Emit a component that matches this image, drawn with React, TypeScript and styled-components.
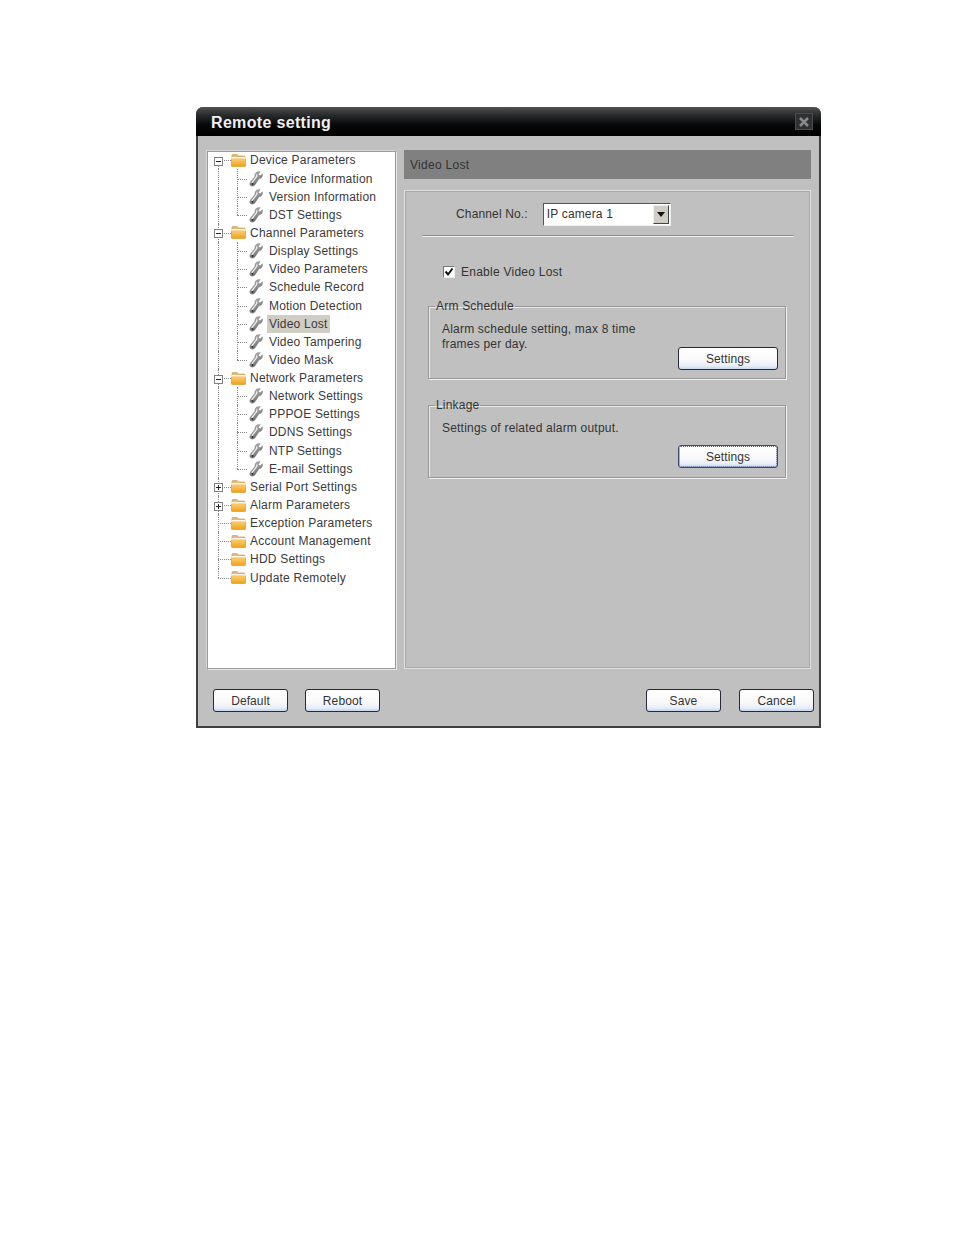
import React from "react";
import styled, { createGlobalStyle } from "styled-components";

const Global = createGlobalStyle`
  html, body { margin: 0; padding: 0; background: #fff; }
  body { font-family: "Liberation Sans", Arial, sans-serif; color: #333; }
`;

const Page = styled.div`
  width: 954px;
  height: 1235px;
  padding: 107px 0 0 196px;
  box-sizing: border-box;
`;

const Win = styled.div`
  width: 625px;
  height: 621px;
  box-sizing: border-box;
  background: #c0c0c0;
  border: solid #404040;
  border-width: 0 2px 2px 2px;
  border-radius: 7px 7px 0 0;
  display: flex;
  flex-direction: column;
`;

const TitleBar = styled.div`
  height: 29px;
  margin: 0 -2px;
  flex: none;
  border-radius: 7px 7px 0 0;
  background: linear-gradient(#505254 0%, #2c2e30 25%, #08090a 60%, #000 100%);
  display: flex;
  align-items: center;
  justify-content: space-between;
  padding: 2px 8px 0 15px;
  box-sizing: border-box;
`;

const Title = styled.div`
  color: #f0f0f0;
  font-size: 16px;
  font-weight: bold;
  letter-spacing: 0.33px;
`;

const CloseBox = styled.div`
  width: 18px;
  height: 17px;
  margin-top: -2px;
  box-sizing: border-box;
  background: #2e3032;
  border: 1px solid #4c4c4c;
  display: flex;
  align-items: center;
  justify-content: center;
`;

const Body = styled.div`
  flex: 1;
  display: flex;
  gap: 8px;
  padding: 14px 8px 0 9px;
  min-height: 0;
`;

const TreePanel = styled.div`
  width: 189px;
  height: 518px;
  margin-top: 1px;
  box-sizing: border-box;
  background: #fff;
  border: 1px solid #9a9a9a;
  box-shadow: 1px 1px 0 #e8e8e8, -1px -1px 0 #d8d8d8;
`;

const TreeList = styled.div`
  margin-top: -0.7px;
`;

const Row = styled.div<{ $spacing: number }>`
  height: 18.15px;
  display: flex;
  align-items: center;
  font-size: 12px;
  letter-spacing: ${(p) => p.$spacing}px;
  white-space: nowrap;
  color: #3a3a3a;
`;

const Guide = styled.div<{ $v: "none" | "full" | "top" | "bottom"; $h: boolean; $ext?: number }>`
  position: relative;
  width: 19.5px;
  height: 100%;
  flex: none;
  display: flex;
  align-items: center;
  justify-content: center;
  &::before {
    content: "";
    display: ${(p) => (p.$v === "none" ? "none" : "block")};
    position: absolute;
    left: 50%;
    top: ${(p) => (p.$v === "bottom" ? "50%" : "0")};
    bottom: ${(p) => (p.$v === "top" ? "50%" : "0")};
    border-left: 1px dotted #888;
  }
  &::after {
    content: "";
    display: ${(p) => (p.$h ? "block" : "none")};
    position: absolute;
    left: 50%;
    right: ${(p) => -(p.$ext ?? 0)}px;
    top: 50%;
    border-top: 1px dotted #888;
  }
`;

const Expander = styled.div`
  position: relative;
  z-index: 1;
  width: 9px;
  height: 9px;
  margin-left: 1px;
  margin-top: 2px;
  box-sizing: border-box;
  background: #fff;
  border: 1px solid #808080;
  display: flex;
  align-items: center;
  justify-content: center;
`;

const IconSlot = styled.div<{ $ml: number }>`
  width: 19px;
  height: 16px;
  margin-left: ${(p) => p.$ml}px;
  flex: none;
  display: flex;
  align-items: center;
  justify-content: flex-start;
`;

const Label = styled.span<{ $selected?: boolean; $ml: number }>`
  padding: 2px;
  line-height: 14px;
  margin-left: ${(p) => p.$ml}px;
  background: ${(p) => (p.$selected ? "#d0cdc4" : "transparent")};
`;

const RightCol = styled.div`
  flex: 1;
  display: flex;
  flex-direction: column;
  gap: 11px;
`;

const Header = styled.div`
  height: 29px;
  background: #808080;
  flex: none;
  display: flex;
  align-items: center;
  padding-left: 6px;
  font-size: 12px;
  letter-spacing: 0.3px;
  color: #333;
`;

const Panel = styled.div`
  height: 479px;
  box-sizing: border-box;
  border: 1px solid #e2e2e2;
  outline: 1px solid #a8a8a8;
  outline-offset: -2px;
  padding: 11px 14px 0 17px;
  display: flex;
  flex-direction: column;
`;

const ChannelRow = styled.div`
  display: flex;
  align-items: center;
  height: 24px;
  padding-left: 34px;
  font-size: 12px;
  letter-spacing: 0.15px;
  gap: 15px;
`;

const Select = styled.div`
  width: 128px;
  height: 23px;
  box-sizing: border-box;
  background: #fff;
  border: 1px solid;
  border-color: #555 #eee #eee #555;
  display: flex;
  align-items: center;
  justify-content: space-between;
  padding: 0 1px 0 3px;
  color: #333;
`;

const SelectBtn = styled.div`
  width: 16px;
  height: 19px;
  background: #cfcdc6;
  border: 1px solid;
  border-color: #eee #444 #444 #eee;
  box-sizing: border-box;
  display: flex;
  align-items: center;
  justify-content: center;
`;

const Rule = styled.div`
  height: 1px;
  background: #8e8e8e;
  border-bottom: 1px solid #f0f0f0;
  margin-top: 9px;
  width: 372px;
`;

const CheckRow = styled.label`
  display: flex;
  align-items: center;
  gap: 6px;
  margin: 28px 0 0 21px;
  font-size: 12px;
  letter-spacing: 0.25px;
`;

const CheckBox = styled.span`
  width: 12px;
  height: 12px;
  box-sizing: border-box;
  background: #fff;
  border: 1px solid;
  border-color: #777 #eee #eee #777;
  display: flex;
  align-items: center;
  justify-content: center;
`;

const Group = styled.fieldset<{ $top: number; $h: number }>`
  margin: ${(p) => p.$top}px 0 0 6px;
  width: 358px;
  height: ${(p) => p.$h}px;
  box-sizing: border-box;
  border: 1px solid #989898;
  box-shadow: 1px 1px 0 #f0f0f0, inset 1px 1px 0 #e8e8e8;
  padding: 0 7px 0 13px;
  font-size: 12px;
  letter-spacing: 0.2px;
  display: flex;
  flex-direction: column;
`;

const Legend = styled.legend`
  padding: 0 1px;
  margin-left: -7px;
  font-size: 12px;
  letter-spacing: 0.2px;
  line-height: 14px;
`;

const GroupText = styled.div`
  line-height: 15px;
  margin-top: 9px;
  width: 215px;
`;

const GroupActions = styled.div<{ $top: number }>`
  display: flex;
  justify-content: flex-end;
  margin-top: ${(p) => p.$top}px;
`;

const Btn = styled.div<{ $w: number; $focus?: boolean }>`
  width: ${(p) => p.$w}px;
  height: 23px;
  box-sizing: border-box;
  border: 1px solid ${(p) => (p.$focus ? "#3f4a6a" : "#262a36")};
  border-radius: 3px;
  background: linear-gradient(#ffffff 0%, #f8f8fa 60%, #e8eef8 85%, #c4d4ee 100%);
  outline: ${(p) => (p.$focus ? "1px dotted #5a62a0" : "none")};
  outline-offset: -2px;
  display: flex;
  align-items: center;
  justify-content: center;
  font-size: 12px;
  letter-spacing: 0.1px;
  color: #333;
`;

const Footer = styled.div`
  display: flex;
  justify-content: space-between;
  padding: 15px 5px 0 15px;
  height: 42px;
  box-sizing: border-box;
  margin-bottom: 10px;
`;

const BtnGroup = styled.div<{ $gap: number }>`
  display: flex;
  gap: ${(p) => p.$gap}px;
`;

const Folder = () => (
  <svg width="15" height="13" viewBox="0 0 15 13">
    <defs>
      <linearGradient id="fg" x1="0" y1="0" x2="0" y2="1">
        <stop offset="0" stopColor="#fcd070" />
        <stop offset="1" stopColor="#f0a018" />
      </linearGradient>
    </defs>
    <path d="M1 3 L1 1.5 Q1 0.6 2 0.6 L6 0.6 L7.5 2 L13 2 Q14 2 14 3 L14 4 L1 4 Z" fill="#e0bc80" stroke="#c89030" strokeWidth="0.6" />
    <rect x="0.4" y="4.6" width="14.2" height="8" rx="1" fill="url(#fg)" stroke="#dc9420" strokeWidth="0.7" />
    <rect x="1" y="3" width="13" height="1.6" fill="#fff" opacity="0.9" />
  </svg>
);

const Wrench = () => (
  <svg width="14" height="16" viewBox="0 0 14 16">
    <defs>
      <linearGradient id="wg" x1="0.2" y1="0" x2="0.8" y2="1">
        <stop offset="0" stopColor="#b8b8b8" />
        <stop offset="0.55" stopColor="#8c8c8c" />
        <stop offset="1" stopColor="#4a4a4a" />
      </linearGradient>
    </defs>
    <path d="M8.5 0.8 L11.2 0.6 L9.3 3.4 L11 5 L13.4 2.8 C14 5.5 12.4 7.7 10 7.8 L6.2 13.5 C5 15.6 2 15.7 1 14 C0.4 12.8 1 11.5 1.8 10.6 L6 5.2 C5.6 3.4 6.5 1.4 8.5 0.8 Z" fill="url(#wg)" stroke="#777" strokeWidth="0.4" />
    <path d="M7.6 3.4 L7.8 5.4 L2.8 11.8" stroke="#f2f2f2" strokeWidth="1.2" fill="none" />
    <circle cx="3.5" cy="13" r="0.9" fill="#2c2c2c" />
  </svg>
);

const Sign = ({ plus }: { plus: boolean }) => (
  <svg width="7" height="7" viewBox="0 0 7 7">
    <path d={plus ? "M1 3.5H6M3.5 1V6" : "M1 3.5H6"} stroke="#222" strokeWidth="1" />
  </svg>
);

type Item = { t: string; lvl: 0 | 1; exp?: "minus" | "plus"; last?: boolean; sel?: boolean; sub?: "mid" | "end"; top?: boolean };

const items: Item[] = [
  { t: "Device Parameters", lvl: 0, exp: "minus", top: true },
  { t: "Device Information", lvl: 1, sub: "mid" },
  { t: "Version Information", lvl: 1, sub: "mid" },
  { t: "DST Settings", lvl: 1, sub: "end" },
  { t: "Channel Parameters", lvl: 0, exp: "minus" },
  { t: "Display Settings", lvl: 1, sub: "mid" },
  { t: "Video Parameters", lvl: 1, sub: "mid" },
  { t: "Schedule Record", lvl: 1, sub: "mid" },
  { t: "Motion Detection", lvl: 1, sub: "mid" },
  { t: "Video Lost", lvl: 1, sub: "mid", sel: true },
  { t: "Video Tampering", lvl: 1, sub: "mid" },
  { t: "Video Mask", lvl: 1, sub: "end" },
  { t: "Network Parameters", lvl: 0, exp: "minus" },
  { t: "Network Settings", lvl: 1, sub: "mid" },
  { t: "PPPOE Settings", lvl: 1, sub: "mid" },
  { t: "DDNS Settings", lvl: 1, sub: "mid" },
  { t: "NTP Settings", lvl: 1, sub: "mid" },
  { t: "E-mail Settings", lvl: 1, sub: "end" },
  { t: "Serial Port Settings", lvl: 0, exp: "plus" },
  { t: "Alarm Parameters", lvl: 0, exp: "plus" },
  { t: "Exception Parameters", lvl: 0 },
  { t: "Account Management", lvl: 0 },
  { t: "HDD Settings", lvl: 0 },
  { t: "Update Remotely", lvl: 0, last: true },
];

const TreeRow = ({ it }: { it: Item }) => {
  if (it.lvl === 1) {
    return (
      <Row $spacing={0.2}>
        <Guide $v="full" $h={false} />
        <Guide $v={it.sub === "end" ? "top" : "full"} $h />
        <IconSlot $ml={2}>
          <Wrench />
        </IconSlot>
        <Label $selected={it.sel} $ml={-1}>{it.t}</Label>
      </Row>
    );
  }
  return (
    <Row $spacing={0.22}>
      <Guide $v={it.top ? "bottom" : it.last ? "top" : "full"} $h $ext={3}>
        {it.exp && (
          <Expander>
            <Sign plus={it.exp === "plus"} />
          </Expander>
        )}
      </Guide>
      <IconSlot $ml={3.5}>
        <Folder />
      </IconSlot>
      <Label $ml={-2}>{it.t}</Label>
    </Row>
  );
};

export default function App() {
  return (
    <Page>
      <Global />
      <Win>
        <TitleBar>
          <Title>Remote setting</Title>
          <CloseBox>
            <svg width="12" height="12" viewBox="0 0 12 12">
              <path d="M2 2L10 10M10 2L2 10" stroke="#8a8a8a" strokeWidth="2.6" />
            </svg>
          </CloseBox>
        </TitleBar>
        <Body>
          <TreePanel>
            <TreeList>
              {items.map((it) => (
                <TreeRow key={it.t} it={it} />
              ))}
            </TreeList>
          </TreePanel>
          <RightCol>
            <Header>Video Lost</Header>
            <Panel>
              <ChannelRow>
                Channel No.:
                <Select>
                  IP camera 1
                  <SelectBtn>
                    <svg width="8" height="5" viewBox="0 0 8 5">
                      <path d="M0 0H8L4 5Z" fill="#111" />
                    </svg>
                  </SelectBtn>
                </Select>
              </ChannelRow>
              <Rule />
              <CheckRow>
                <CheckBox>
                  <svg width="10" height="10" viewBox="0 0 10 10">
                    <path d="M1.5 4.5L4 7.5L8.5 1.5" stroke="#111" strokeWidth="2" fill="none" />
                  </svg>
                </CheckBox>
                Enable Video Lost
              </CheckRow>
              <Group $top={20} $h={80}>
                <Legend>Arm Schedule</Legend>
                <GroupText>Alarm schedule setting, max 8 time frames per day.</GroupText>
                <GroupActions $top={-5}>
                  <Btn $w={100}>Settings</Btn>
                </GroupActions>
              </Group>
              <Group $top={19} $h={80}>
                <Legend>Linkage</Legend>
                <GroupText>Settings of related alarm output.</GroupText>
                <GroupActions $top={9}>
                  <Btn $w={100} $focus>Settings</Btn>
                </GroupActions>
              </Group>
            </Panel>
          </RightCol>
        </Body>
        <Footer>
          <BtnGroup $gap={17}>
            <Btn $w={75}>Default</Btn>
            <Btn $w={75}>Reboot</Btn>
          </BtnGroup>
          <BtnGroup $gap={18}>
            <Btn $w={75}>Save</Btn>
            <Btn $w={75}>Cancel</Btn>
          </BtnGroup>
        </Footer>
      </Win>
    </Page>
  );
}
